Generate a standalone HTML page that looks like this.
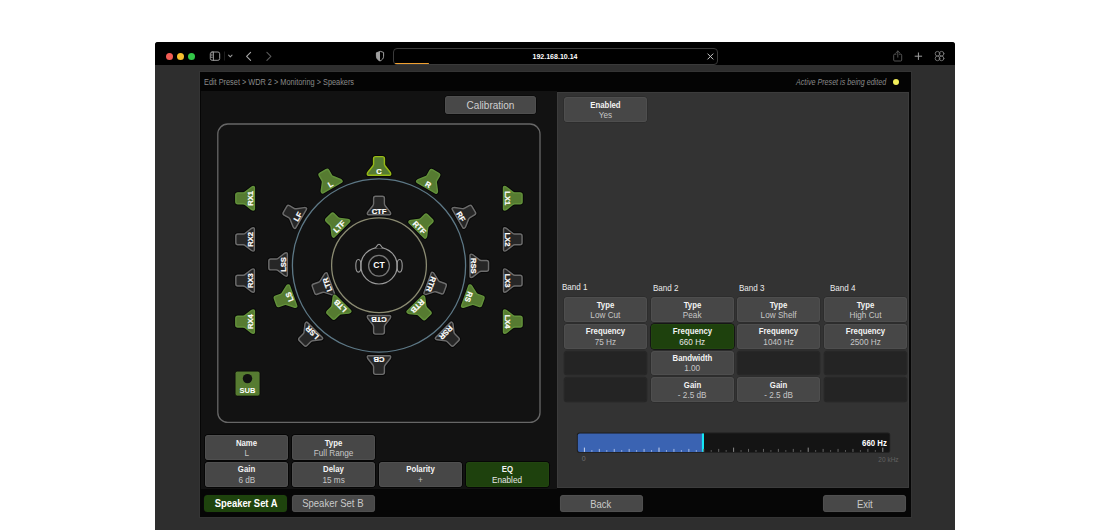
<!DOCTYPE html>
<html><head><meta charset="utf-8">
<style>
*{margin:0;padding:0;box-sizing:border-box}
html,body{width:1110px;height:530px;overflow:hidden;background:#fff;font-family:"Liberation Sans",sans-serif}
.a{position:absolute}
#win{left:155px;top:42px;width:800px;height:488px;background:#2e2e2e;border-radius:3px 3px 0 0;overflow:hidden}
#tb{left:155px;top:42px;width:800px;height:23.4px;background:#000;border-radius:3px 3px 0 0}
.dot{width:7px;height:7px;border-radius:50%;top:53px}
#url{left:393px;top:48px;width:324.6px;height:16.6px;border:1.8px solid #3a3a3a;border-radius:4px;background:#000}
#urltxt{left:393px;top:48.5px;width:324px;height:16px;color:#fff;font-size:8px;font-weight:bold;text-align:center;line-height:16px;transform:scaleX(0.88)}
#app{left:199.5px;top:72px;width:711px;height:445px;background:#060606;box-shadow:0 0 0 1px #343434}
#crumb{left:199.5px;top:72px;width:711.5px;height:18.5px;background:#040404}
#lp{left:200.5px;top:90.5px;width:356px;height:398.7px;background:#121212}
#rp{left:556.8px;top:92.4px;width:352.1px;height:395.3px;background:#333;border:1px solid #3c3c3c}
.btn{position:absolute;background:#484848;border-radius:3.5px;color:#fff;text-align:center;box-shadow:inset 0 0 0 1px #4f4f4f,0 0 0 0.8px #0a0a0a}
.btn2{position:absolute;background:#474747;border-radius:3.5px;text-align:center;width:83px;height:24.5px;box-shadow:inset 0 0 0 1px #4e4e4e,0 0 0 0.8px #2c2c2c}
.btn2 .t{position:absolute;left:0;right:0;top:3.2px;font-size:8.2px;font-weight:bold;color:#f4f4f4;line-height:10px;transform:scaleX(0.95)}
.btn2 .v{position:absolute;left:0;right:0;top:13.5px;font-size:8.2px;color:#c6c6c6;line-height:10px}
.dk{box-shadow:inset 0 0 0 1px #4f4f4f,0 0 0 1px #060606}
.dk.green{box-shadow:inset 0 0 0 1px #224510,0 0 0 1px #060606}
.empty{background:#242424;box-shadow:inset 0 0 0 1px #272727,0 0 0 0.8px #2e2e2e}
.green{background:#1e410d;box-shadow:inset 0 0 0 1px #224510,0 0 0 0.8px #0e0e0e}
.green .v{color:#e6e6e6}
.band{position:absolute;font-size:8.4px;color:#ececec;line-height:10px;transform:scaleX(0.96);transform-origin:0 0}
</style></head><body>
<div id="win" class="a"></div>
<div id="tb" class="a"></div>
<div class="a dot" style="left:165.8px;background:#f25c54"></div>
<div class="a dot" style="left:176.9px;background:#f6bf2e"></div>
<div class="a dot" style="left:188px;background:#33c748"></div>
<div id="url" class="a"></div>
<div class="a" style="left:394.5px;top:62.6px;width:34.5px;height:1.7px;background:#f0a030;border-radius:1px"></div>
<div id="urltxt" class="a">192.168.10.14</div>

<!-- toolbar icons -->
<svg class="a" style="left:0;top:0" width="1110" height="530" viewBox="0 0 1110 530">
<g fill="none" stroke="#9a9a9a" stroke-width="1" stroke-linecap="round" stroke-linejoin="round">
<rect x="210.3" y="52" width="9.4" height="8.3" rx="1.8"/>
<line x1="213.4" y1="52" x2="213.4" y2="60.3"/>
<path d="M211.4 54.2h0.9M211.4 55.8h0.9M211.4 57.4h0.9" stroke-width="0.8"/>
<path d="M228.6 55.2l1.7 1.6l1.7-1.6" stroke-width="1.1"/>
<path d="M250.6 52.3l-4 4l4 4" stroke="#a8a8a8" stroke-width="1.1"/>
<path d="M266.9 52.3l4 4l-4 4" stroke="#5a5a5a" stroke-width="1.1"/>
<path d="M380 51.5l-3.6 1.3v3.4c0 2.4 1.6 3.8 3.6 4.8c2-1 3.6-2.4 3.6-4.8v-3.4z" stroke="#a0a0a0" stroke-width="1"/>
<path d="M380 51.5l-3.6 1.3v3.4c0 2.4 1.6 3.8 3.6 4.8z" fill="#a0a0a0" stroke="none"/>
<path d="M707.8 53.9l5.2 5.2M713 53.9l-5.2 5.2" stroke="#c8c8c8" stroke-width="1"/>
<path d="M896 54.2h-1.3a1 1 0 0 0-1 1v4.8a1 1 0 0 0 1 1h6a1 1 0 0 0 1-1v-4.8a1 1 0 0 0-1-1h-1.3M897.8 51v6.2M895.8 53l2-2l2 2" stroke="#5c5c5c" stroke-width="0.9"/>
<path d="M918.4 52.9v6.6M915.1 56.2h6.6" stroke="#a0a0a0" stroke-width="1"/>
<g stroke="#7a7a7a" stroke-width="0.9"><circle cx="937.5" cy="53.7" r="2.3"/><circle cx="941.6" cy="53.7" r="2.3"/><circle cx="937.5" cy="58.4" r="2.3"/><circle cx="941.6" cy="58.4" r="2.3"/></g>
</g>
<line x1="224.5" y1="51.5" x2="224.5" y2="60.5" stroke="#1e1e1e" stroke-width="1"/>
</svg>
<div id="app" class="a"></div>
<div id="crumb" class="a"></div>
<div id="lp" class="a"></div>
<div id="rp" class="a"></div>

<!-- breadcrumb -->
<div class="a" style="left:204px;top:76.75px;font-size:8.5px;color:#8a8a8a;line-height:10px;white-space:nowrap;transform:scaleX(0.864);transform-origin:0 0">Edit Preset &gt; WDR 2 &gt; Monitoring &gt; Speakers</div>
<div class="a" style="left:796px;top:77px;font-size:8.3px;color:#8a8a8a;font-style:italic;line-height:10px;white-space:nowrap;transform:scaleX(0.861);transform-origin:0 0">Active Preset is being edited</div>
<div class="a" style="left:893px;top:78.8px;width:6.4px;height:6.4px;border-radius:50%;background:#f2ee5a"></div>

<!-- calibration -->
<div class="btn" style="left:445px;top:95.7px;width:91px;height:18px;color:#cfcfcf;font-size:10px;line-height:20px">Calibration</div>

<!-- bottom left buttons -->
<div class="btn2 dk" style="left:205.4px;top:435.4px"><div class="t">Name</div><div class="v">L</div></div>
<div class="btn2 dk" style="left:292.1px;top:435.4px"><div class="t">Type</div><div class="v">Full Range</div></div>
<div class="btn2 dk" style="left:205.4px;top:462.1px"><div class="t">Gain</div><div class="v">6 dB</div></div>
<div class="btn2 dk" style="left:292.1px;top:462.1px"><div class="t">Delay</div><div class="v">15 ms</div></div>
<div class="btn2 dk" style="left:378.8px;top:462.1px"><div class="t">Polarity</div><div class="v">+</div></div>
<div class="btn2 green dk" style="left:465.5px;top:462.1px"><div class="t">EQ</div><div class="v">Enabled</div></div>

<div class="btn" style="left:204px;top:494.6px;width:83.4px;height:17.4px;background:#1e430d;box-shadow:0 0 0 0.8px #0a0a0a;font-size:10.5px;font-weight:bold;line-height:17.4px"><span style="display:inline-block;transform:scaleX(0.895)">Speaker Set A</span></div>
<div class="btn" style="left:291.8px;top:494.6px;width:83px;height:17.4px;color:#cacaca;font-size:10.5px;line-height:17.4px"><span style="display:inline-block;transform:scaleX(0.905)">Speaker Set B</span></div>
<div class="btn" style="left:559.5px;top:494.6px;width:83.2px;height:17.3px;color:#cacaca;font-size:10.5px;line-height:18.6px"><span style="display:inline-block;transform:scaleX(0.9)">Back</span></div>
<div class="btn" style="left:822.7px;top:494.6px;width:83.2px;height:17.3px;color:#cacaca;font-size:10.5px;line-height:18.6px"><span style="display:inline-block;transform:scaleX(0.9)">Exit</span></div>

<!-- right panel -->
<div class="btn2" style="left:564px;top:97.4px"><div class="t">Enabled</div><div class="v">Yes</div></div>

<div class="band" style="left:561.8px;top:281.5px">Band 1</div>
<div class="band" style="left:652.9px;top:283.3px">Band 2</div>
<div class="band" style="left:738.9px;top:282.8px">Band 3</div>
<div class="band" style="left:830.4px;top:282.8px">Band 4</div>

<div class="btn2" style="left:563.9px;top:297.4px"><div class="t">Type</div><div class="v">Low Cut</div></div>
<div class="btn2" style="left:563.9px;top:324.1px"><div class="t">Frequency</div><div class="v">75 Hz</div></div>
<div class="btn2 empty" style="left:563.9px;top:350.6px"></div>
<div class="btn2 empty" style="left:563.9px;top:377.4px"></div>

<div class="btn2" style="left:650.7px;top:297.4px"><div class="t">Type</div><div class="v">Peak</div></div>
<div class="btn2 green" style="left:650.7px;top:324.1px"><div class="t">Frequency</div><div class="v">660 Hz</div></div>
<div class="btn2" style="left:650.7px;top:350.6px"><div class="t">Bandwidth</div><div class="v">1.00</div></div>
<div class="btn2" style="left:650.7px;top:377.4px"><div class="t">Gain</div><div class="v">- 2.5 dB</div></div>

<div class="btn2" style="left:737.1px;top:297.4px"><div class="t">Type</div><div class="v">Low Shelf</div></div>
<div class="btn2" style="left:737.1px;top:324.1px"><div class="t">Frequency</div><div class="v">1040 Hz</div></div>
<div class="btn2 empty" style="left:737.1px;top:350.6px"></div>
<div class="btn2" style="left:737.1px;top:377.4px"><div class="t">Gain</div><div class="v">- 2.5 dB</div></div>

<div class="btn2" style="left:824px;top:297.4px"><div class="t">Type</div><div class="v">High Cut</div></div>
<div class="btn2" style="left:824px;top:324.1px"><div class="t">Frequency</div><div class="v">2500 Hz</div></div>
<div class="btn2 empty" style="left:824px;top:350.6px"></div>
<div class="btn2 empty" style="left:824px;top:377.4px"></div>

<!-- slider -->
<svg class="a" style="left:0;top:0" width="1110" height="530" viewBox="0 0 1110 530">
<rect x="576.9" y="432.5" width="313.3" height="20.3" rx="2.6" fill="#1e1e1e"/>
<rect x="577.8" y="433.4" width="311.5" height="18.5" rx="2" fill="#141414"/>
<path d="M579.8 433.4H702V451.9H579.8A2 2 0 0 1 577.8 449.9V435.4A2 2 0 0 1 579.8 433.4Z" fill="#3a63b2"/>
<rect x="701.9" y="433.4" width="2.1" height="18.5" fill="#14e6f5"/>
<rect x="583.90" y="447.60" width="1" height="4.30" fill="#c8d4ee"/>
<rect x="591.36" y="450.00" width="1" height="1.90" fill="#90a8dc"/>
<rect x="598.82" y="448.90" width="1" height="3.00" fill="#a8bce4"/>
<rect x="606.28" y="450.00" width="1" height="1.90" fill="#90a8dc"/>
<rect x="613.74" y="448.90" width="1" height="3.00" fill="#a8bce4"/>
<rect x="621.20" y="450.00" width="1" height="1.90" fill="#90a8dc"/>
<rect x="628.66" y="448.90" width="1" height="3.00" fill="#a8bce4"/>
<rect x="636.12" y="450.00" width="1" height="1.90" fill="#90a8dc"/>
<rect x="643.58" y="448.90" width="1" height="3.00" fill="#a8bce4"/>
<rect x="651.04" y="450.00" width="1" height="1.90" fill="#90a8dc"/>
<rect x="658.50" y="447.60" width="1" height="4.30" fill="#c8d4ee"/>
<rect x="665.96" y="450.00" width="1" height="1.90" fill="#90a8dc"/>
<rect x="673.42" y="448.90" width="1" height="3.00" fill="#a8bce4"/>
<rect x="680.88" y="450.00" width="1" height="1.90" fill="#90a8dc"/>
<rect x="688.34" y="448.90" width="1" height="3.00" fill="#a8bce4"/>
<rect x="695.80" y="450.00" width="1" height="1.90" fill="#90a8dc"/>
<rect x="703.26" y="448.90" width="1" height="3.00" fill="#676767"/>
<rect x="710.72" y="450.00" width="1" height="1.90" fill="#565656"/>
<rect x="718.18" y="448.90" width="1" height="3.00" fill="#676767"/>
<rect x="725.64" y="450.00" width="1" height="1.90" fill="#565656"/>
<rect x="733.10" y="447.60" width="1" height="4.30" fill="#8a8a8a"/>
<rect x="740.56" y="450.00" width="1" height="1.90" fill="#565656"/>
<rect x="748.02" y="448.90" width="1" height="3.00" fill="#676767"/>
<rect x="755.48" y="450.00" width="1" height="1.90" fill="#565656"/>
<rect x="762.94" y="448.90" width="1" height="3.00" fill="#676767"/>
<rect x="770.40" y="450.00" width="1" height="1.90" fill="#565656"/>
<rect x="777.86" y="448.90" width="1" height="3.00" fill="#676767"/>
<rect x="785.32" y="450.00" width="1" height="1.90" fill="#565656"/>
<rect x="792.78" y="448.90" width="1" height="3.00" fill="#676767"/>
<rect x="800.24" y="450.00" width="1" height="1.90" fill="#565656"/>
<rect x="807.70" y="447.60" width="1" height="4.30" fill="#8a8a8a"/>
<rect x="815.16" y="450.00" width="1" height="1.90" fill="#565656"/>
<rect x="822.62" y="448.90" width="1" height="3.00" fill="#676767"/>
<rect x="830.08" y="450.00" width="1" height="1.90" fill="#565656"/>
<rect x="837.54" y="448.90" width="1" height="3.00" fill="#676767"/>
<rect x="845.00" y="450.00" width="1" height="1.90" fill="#565656"/>
<rect x="852.46" y="448.90" width="1" height="3.00" fill="#676767"/>
<rect x="859.92" y="450.00" width="1" height="1.90" fill="#565656"/>
<rect x="867.38" y="448.90" width="1" height="3.00" fill="#676767"/>
<rect x="874.84" y="450.00" width="1" height="1.90" fill="#565656"/>
<rect x="882.30" y="447.60" width="1" height="4.30" fill="#8a8a8a"/>
</svg>
<div class="a" style="left:820px;top:437.5px;width:66.8px;text-align:right;font-size:8.4px;font-weight:bold;color:#fff;line-height:10px;transform:scaleX(0.93);transform-origin:100% 0">660 Hz</div>
<div class="a" style="left:581.8px;top:455.1px;font-size:7px;color:#6e6e6e;line-height:8px">0</div>
<div class="a" style="left:860px;top:455.5px;width:38.6px;text-align:right;font-size:6.5px;color:#626262;line-height:8px">20 kHz</div>

<!-- SVG overlay -->
<svg class="a" style="left:0;top:0" width="1110" height="530" viewBox="0 0 1110 530" id="ov">
<rect x="217.8" y="124" width="322.2" height="298.4" rx="10" fill="none" stroke="#676767" stroke-width="1.3"/>
<circle cx="379.00" cy="265.50" r="86.6" fill="none" stroke="#5d7886" stroke-width="1.3"/>
<circle cx="379.00" cy="265.30" r="47.4" fill="none" stroke="#8b8b72" stroke-width="1.3"/>
<circle cx="379.00" cy="265.80" r="18.2" fill="none" stroke="#9a9a9a" stroke-width="1.2"/>
<circle cx="379.00" cy="265.80" r="10.4" fill="none" stroke="#777" stroke-width="1.3"/>
<ellipse cx="358.4" cy="265.80" rx="2.6" ry="6.3" fill="none" stroke="#9a9a9a" stroke-width="1.1"/>
<ellipse cx="399.6" cy="265.80" rx="2.6" ry="6.3" fill="none" stroke="#9a9a9a" stroke-width="1.1"/>
<path d="M375.3 248.00 C376.6 247.20 377.2 244.20 379 244.20 C380.8 244.20 381.4 247.20 382.7 248.00" fill="#111" stroke="#9a9a9a" stroke-width="1.1"/>
<text x="379.00" y="268.30" font-family="Liberation Sans" font-weight="bold" font-size="8.6" fill="#fff" text-anchor="middle">CT</text>
<g transform="translate(379.00 265.50) rotate(0) translate(0 -89.60)"><path d="M-5.43 -17.27Q-5.43 -19.27 -3.43 -19.27L3.43 -19.27Q5.43 -19.27 5.43 -17.27L5.43 -12.00Q5.43 -10.80 6.17 -9.86L11.08 -3.62Q11.72 -2.80 11.72 -1.76L11.72 -1.76Q11.72 -0.72 10.69 -0.72L-10.69 -0.72Q-11.72 -0.72 -11.72 -1.76L-11.72 -1.76Q-11.72 -2.80 -11.08 -3.62L-6.17 -9.86Q-5.43 -10.80 -5.43 -12.00Z" fill="none" stroke="#000" stroke-width="3.3" stroke-opacity="0.6"/><path d="M-5.43 -17.27Q-5.43 -19.27 -3.43 -19.27L3.43 -19.27Q5.43 -19.27 5.43 -17.27L5.43 -12.00Q5.43 -10.80 6.17 -9.86L11.08 -3.62Q11.72 -2.80 11.72 -1.76L11.72 -1.76Q11.72 -0.72 10.69 -0.72L-10.69 -0.72Q-11.72 -0.72 -11.72 -1.76L-11.72 -1.76Q-11.72 -2.80 -11.08 -3.62L-6.17 -9.86Q-5.43 -10.80 -5.43 -12.00Z" fill="#567b31" stroke="#98ba16" stroke-width="1.45"/><text x="0" y="-1.85" font-family="Liberation Sans" font-weight="bold" font-size="7.6" fill="#fff" stroke="#fff" stroke-width="0.22" text-anchor="middle">C</text></g>
<g transform="translate(377.50 265.75) rotate(-30) translate(0 -89.60)"><path d="M-5.43 -17.27Q-5.43 -19.27 -3.43 -19.27L3.43 -19.27Q5.43 -19.27 5.43 -17.27L5.43 -12.00Q5.43 -10.80 6.17 -9.86L11.08 -3.62Q11.72 -2.80 11.72 -1.76L11.72 -1.76Q11.72 -0.72 10.69 -0.72L-10.69 -0.72Q-11.72 -0.72 -11.72 -1.76L-11.72 -1.76Q-11.72 -2.80 -11.08 -3.62L-6.17 -9.86Q-5.43 -10.80 -5.43 -12.00Z" fill="none" stroke="#000" stroke-width="3.3" stroke-opacity="0.6"/><path d="M-5.43 -17.27Q-5.43 -19.27 -3.43 -19.27L3.43 -19.27Q5.43 -19.27 5.43 -17.27L5.43 -12.00Q5.43 -10.80 6.17 -9.86L11.08 -3.62Q11.72 -2.80 11.72 -1.76L11.72 -1.76Q11.72 -0.72 10.69 -0.72L-10.69 -0.72Q-11.72 -0.72 -11.72 -1.76L-11.72 -1.76Q-11.72 -2.80 -11.08 -3.62L-6.17 -9.86Q-5.43 -10.80 -5.43 -12.00Z" fill="#567b31" stroke="#62913a" stroke-width="1.45"/><text x="0" y="-1.85" font-family="Liberation Sans" font-weight="bold" font-size="7.6" fill="#fff" stroke="#fff" stroke-width="0.22" text-anchor="middle">L</text></g>
<g transform="translate(381.20 265.95) rotate(30) translate(0 -89.60)"><path d="M-5.43 -17.27Q-5.43 -19.27 -3.43 -19.27L3.43 -19.27Q5.43 -19.27 5.43 -17.27L5.43 -12.00Q5.43 -10.80 6.17 -9.86L11.08 -3.62Q11.72 -2.80 11.72 -1.76L11.72 -1.76Q11.72 -0.72 10.69 -0.72L-10.69 -0.72Q-11.72 -0.72 -11.72 -1.76L-11.72 -1.76Q-11.72 -2.80 -11.08 -3.62L-6.17 -9.86Q-5.43 -10.80 -5.43 -12.00Z" fill="none" stroke="#000" stroke-width="3.3" stroke-opacity="0.6"/><path d="M-5.43 -17.27Q-5.43 -19.27 -3.43 -19.27L3.43 -19.27Q5.43 -19.27 5.43 -17.27L5.43 -12.00Q5.43 -10.80 6.17 -9.86L11.08 -3.62Q11.72 -2.80 11.72 -1.76L11.72 -1.76Q11.72 -0.72 10.69 -0.72L-10.69 -0.72Q-11.72 -0.72 -11.72 -1.76L-11.72 -1.76Q-11.72 -2.80 -11.08 -3.62L-6.17 -9.86Q-5.43 -10.80 -5.43 -12.00Z" fill="#567b31" stroke="#62913a" stroke-width="1.45"/><text x="0" y="-1.85" font-family="Liberation Sans" font-weight="bold" font-size="7.6" fill="#fff" stroke="#fff" stroke-width="0.22" text-anchor="middle">R</text></g>
<g transform="translate(379.35 263.80) rotate(-60) translate(0 -89.60)"><path d="M-5.43 -17.27Q-5.43 -19.27 -3.43 -19.27L3.43 -19.27Q5.43 -19.27 5.43 -17.27L5.43 -12.00Q5.43 -10.80 6.17 -9.86L11.08 -3.62Q11.72 -2.80 11.72 -1.76L11.72 -1.76Q11.72 -0.72 10.69 -0.72L-10.69 -0.72Q-11.72 -0.72 -11.72 -1.76L-11.72 -1.76Q-11.72 -2.80 -11.08 -3.62L-6.17 -9.86Q-5.43 -10.80 -5.43 -12.00Z" fill="none" stroke="#000" stroke-width="3.3" stroke-opacity="0.6"/><path d="M-5.43 -17.27Q-5.43 -19.27 -3.43 -19.27L3.43 -19.27Q5.43 -19.27 5.43 -17.27L5.43 -12.00Q5.43 -10.80 6.17 -9.86L11.08 -3.62Q11.72 -2.80 11.72 -1.76L11.72 -1.76Q11.72 -0.72 10.69 -0.72L-10.69 -0.72Q-11.72 -0.72 -11.72 -1.76L-11.72 -1.76Q-11.72 -2.80 -11.08 -3.62L-6.17 -9.86Q-5.43 -10.80 -5.43 -12.00Z" fill="#262626" stroke="#6c6c6c" stroke-width="1.45"/><text x="0" y="-1.85" font-family="Liberation Sans" font-weight="bold" font-size="7.6" fill="#fff" stroke="#fff" stroke-width="0.22" text-anchor="middle">LF</text></g>
<g transform="translate(379.35 263.70) rotate(60) translate(0 -89.60)"><path d="M-5.43 -17.27Q-5.43 -19.27 -3.43 -19.27L3.43 -19.27Q5.43 -19.27 5.43 -17.27L5.43 -12.00Q5.43 -10.80 6.17 -9.86L11.08 -3.62Q11.72 -2.80 11.72 -1.76L11.72 -1.76Q11.72 -0.72 10.69 -0.72L-10.69 -0.72Q-11.72 -0.72 -11.72 -1.76L-11.72 -1.76Q-11.72 -2.80 -11.08 -3.62L-6.17 -9.86Q-5.43 -10.80 -5.43 -12.00Z" fill="none" stroke="#000" stroke-width="3.3" stroke-opacity="0.6"/><path d="M-5.43 -17.27Q-5.43 -19.27 -3.43 -19.27L3.43 -19.27Q5.43 -19.27 5.43 -17.27L5.43 -12.00Q5.43 -10.80 6.17 -9.86L11.08 -3.62Q11.72 -2.80 11.72 -1.76L11.72 -1.76Q11.72 -0.72 10.69 -0.72L-10.69 -0.72Q-11.72 -0.72 -11.72 -1.76L-11.72 -1.76Q-11.72 -2.80 -11.08 -3.62L-6.17 -9.86Q-5.43 -10.80 -5.43 -12.00Z" fill="#262626" stroke="#6c6c6c" stroke-width="1.45"/><text x="0" y="-1.85" font-family="Liberation Sans" font-weight="bold" font-size="7.6" fill="#fff" stroke="#fff" stroke-width="0.22" text-anchor="middle">RF</text></g>
<g transform="translate(377.70 264.45) rotate(-90) translate(0 -89.60)"><path d="M-5.43 -17.27Q-5.43 -19.27 -3.43 -19.27L3.43 -19.27Q5.43 -19.27 5.43 -17.27L5.43 -12.00Q5.43 -10.80 6.17 -9.86L11.08 -3.62Q11.72 -2.80 11.72 -1.76L11.72 -1.76Q11.72 -0.72 10.69 -0.72L-10.69 -0.72Q-11.72 -0.72 -11.72 -1.76L-11.72 -1.76Q-11.72 -2.80 -11.08 -3.62L-6.17 -9.86Q-5.43 -10.80 -5.43 -12.00Z" fill="none" stroke="#000" stroke-width="3.3" stroke-opacity="0.6"/><path d="M-5.43 -17.27Q-5.43 -19.27 -3.43 -19.27L3.43 -19.27Q5.43 -19.27 5.43 -17.27L5.43 -12.00Q5.43 -10.80 6.17 -9.86L11.08 -3.62Q11.72 -2.80 11.72 -1.76L11.72 -1.76Q11.72 -0.72 10.69 -0.72L-10.69 -0.72Q-11.72 -0.72 -11.72 -1.76L-11.72 -1.76Q-11.72 -2.80 -11.08 -3.62L-6.17 -9.86Q-5.43 -10.80 -5.43 -12.00Z" fill="#262626" stroke="#6c6c6c" stroke-width="1.45"/><text x="0" y="-1.85" font-family="Liberation Sans" font-weight="bold" font-size="7.6" fill="#fff" stroke="#fff" stroke-width="0.22" text-anchor="middle">LSS</text></g>
<g transform="translate(379.70 265.85) rotate(90) translate(0 -89.60)"><path d="M-5.43 -17.27Q-5.43 -19.27 -3.43 -19.27L3.43 -19.27Q5.43 -19.27 5.43 -17.27L5.43 -12.00Q5.43 -10.80 6.17 -9.86L11.08 -3.62Q11.72 -2.80 11.72 -1.76L11.72 -1.76Q11.72 -0.72 10.69 -0.72L-10.69 -0.72Q-11.72 -0.72 -11.72 -1.76L-11.72 -1.76Q-11.72 -2.80 -11.08 -3.62L-6.17 -9.86Q-5.43 -10.80 -5.43 -12.00Z" fill="none" stroke="#000" stroke-width="3.3" stroke-opacity="0.6"/><path d="M-5.43 -17.27Q-5.43 -19.27 -3.43 -19.27L3.43 -19.27Q5.43 -19.27 5.43 -17.27L5.43 -12.00Q5.43 -10.80 6.17 -9.86L11.08 -3.62Q11.72 -2.80 11.72 -1.76L11.72 -1.76Q11.72 -0.72 10.69 -0.72L-10.69 -0.72Q-11.72 -0.72 -11.72 -1.76L-11.72 -1.76Q-11.72 -2.80 -11.08 -3.62L-6.17 -9.86Q-5.43 -10.80 -5.43 -12.00Z" fill="#262626" stroke="#6c6c6c" stroke-width="1.45"/><text x="0" y="-1.85" font-family="Liberation Sans" font-weight="bold" font-size="7.6" fill="#fff" stroke="#fff" stroke-width="0.22" text-anchor="middle">RSS</text></g>
<g transform="translate(377.92 264.74) rotate(-110) translate(0 -89.60)"><path d="M-5.43 -17.27Q-5.43 -19.27 -3.43 -19.27L3.43 -19.27Q5.43 -19.27 5.43 -17.27L5.43 -12.00Q5.43 -10.80 6.17 -9.86L11.08 -3.62Q11.72 -2.80 11.72 -1.76L11.72 -1.76Q11.72 -0.72 10.69 -0.72L-10.69 -0.72Q-11.72 -0.72 -11.72 -1.76L-11.72 -1.76Q-11.72 -2.80 -11.08 -3.62L-6.17 -9.86Q-5.43 -10.80 -5.43 -12.00Z" fill="none" stroke="#000" stroke-width="3.3" stroke-opacity="0.6"/><path d="M-5.43 -17.27Q-5.43 -19.27 -3.43 -19.27L3.43 -19.27Q5.43 -19.27 5.43 -17.27L5.43 -12.00Q5.43 -10.80 6.17 -9.86L11.08 -3.62Q11.72 -2.80 11.72 -1.76L11.72 -1.76Q11.72 -0.72 10.69 -0.72L-10.69 -0.72Q-11.72 -0.72 -11.72 -1.76L-11.72 -1.76Q-11.72 -2.80 -11.08 -3.62L-6.17 -9.86Q-5.43 -10.80 -5.43 -12.00Z" fill="#567b31" stroke="#62913a" stroke-width="1.45"/><text x="0" y="-1.85" font-family="Liberation Sans" font-weight="bold" font-size="7.6" fill="#fff" stroke="#fff" stroke-width="0.22" text-anchor="middle">LS</text></g>
<g transform="translate(380.38 264.74) rotate(110) translate(0 -89.60)"><path d="M-5.43 -17.27Q-5.43 -19.27 -3.43 -19.27L3.43 -19.27Q5.43 -19.27 5.43 -17.27L5.43 -12.00Q5.43 -10.80 6.17 -9.86L11.08 -3.62Q11.72 -2.80 11.72 -1.76L11.72 -1.76Q11.72 -0.72 10.69 -0.72L-10.69 -0.72Q-11.72 -0.72 -11.72 -1.76L-11.72 -1.76Q-11.72 -2.80 -11.08 -3.62L-6.17 -9.86Q-5.43 -10.80 -5.43 -12.00Z" fill="none" stroke="#000" stroke-width="3.3" stroke-opacity="0.6"/><path d="M-5.43 -17.27Q-5.43 -19.27 -3.43 -19.27L3.43 -19.27Q5.43 -19.27 5.43 -17.27L5.43 -12.00Q5.43 -10.80 6.17 -9.86L11.08 -3.62Q11.72 -2.80 11.72 -1.76L11.72 -1.76Q11.72 -0.72 10.69 -0.72L-10.69 -0.72Q-11.72 -0.72 -11.72 -1.76L-11.72 -1.76Q-11.72 -2.80 -11.08 -3.62L-6.17 -9.86Q-5.43 -10.80 -5.43 -12.00Z" fill="#567b31" stroke="#62913a" stroke-width="1.45"/><text x="0" y="-1.85" font-family="Liberation Sans" font-weight="bold" font-size="7.6" fill="#fff" stroke="#fff" stroke-width="0.22" text-anchor="middle">RS</text></g>
<g transform="translate(378.72 266.08) rotate(-135) translate(0 -89.60)"><path d="M-5.43 -17.27Q-5.43 -19.27 -3.43 -19.27L3.43 -19.27Q5.43 -19.27 5.43 -17.27L5.43 -12.00Q5.43 -10.80 6.17 -9.86L11.08 -3.62Q11.72 -2.80 11.72 -1.76L11.72 -1.76Q11.72 -0.72 10.69 -0.72L-10.69 -0.72Q-11.72 -0.72 -11.72 -1.76L-11.72 -1.76Q-11.72 -2.80 -11.08 -3.62L-6.17 -9.86Q-5.43 -10.80 -5.43 -12.00Z" fill="none" stroke="#000" stroke-width="3.3" stroke-opacity="0.6"/><path d="M-5.43 -17.27Q-5.43 -19.27 -3.43 -19.27L3.43 -19.27Q5.43 -19.27 5.43 -17.27L5.43 -12.00Q5.43 -10.80 6.17 -9.86L11.08 -3.62Q11.72 -2.80 11.72 -1.76L11.72 -1.76Q11.72 -0.72 10.69 -0.72L-10.69 -0.72Q-11.72 -0.72 -11.72 -1.76L-11.72 -1.76Q-11.72 -2.80 -11.08 -3.62L-6.17 -9.86Q-5.43 -10.80 -5.43 -12.00Z" fill="#262626" stroke="#6c6c6c" stroke-width="1.45"/><text x="0" y="-1.85" font-family="Liberation Sans" font-weight="bold" font-size="7.6" fill="#fff" stroke="#fff" stroke-width="0.22" text-anchor="middle">LSR</text></g>
<g transform="translate(379.28 266.08) rotate(135) translate(0 -89.60)"><path d="M-5.43 -17.27Q-5.43 -19.27 -3.43 -19.27L3.43 -19.27Q5.43 -19.27 5.43 -17.27L5.43 -12.00Q5.43 -10.80 6.17 -9.86L11.08 -3.62Q11.72 -2.80 11.72 -1.76L11.72 -1.76Q11.72 -0.72 10.69 -0.72L-10.69 -0.72Q-11.72 -0.72 -11.72 -1.76L-11.72 -1.76Q-11.72 -2.80 -11.08 -3.62L-6.17 -9.86Q-5.43 -10.80 -5.43 -12.00Z" fill="none" stroke="#000" stroke-width="3.3" stroke-opacity="0.6"/><path d="M-5.43 -17.27Q-5.43 -19.27 -3.43 -19.27L3.43 -19.27Q5.43 -19.27 5.43 -17.27L5.43 -12.00Q5.43 -10.80 6.17 -9.86L11.08 -3.62Q11.72 -2.80 11.72 -1.76L11.72 -1.76Q11.72 -0.72 10.69 -0.72L-10.69 -0.72Q-11.72 -0.72 -11.72 -1.76L-11.72 -1.76Q-11.72 -2.80 -11.08 -3.62L-6.17 -9.86Q-5.43 -10.80 -5.43 -12.00Z" fill="#262626" stroke="#6c6c6c" stroke-width="1.45"/><text x="0" y="-1.85" font-family="Liberation Sans" font-weight="bold" font-size="7.6" fill="#fff" stroke="#fff" stroke-width="0.22" text-anchor="middle">RSR</text></g>
<g transform="translate(379.00 265.50) rotate(180) translate(0 -89.60)"><path d="M-5.43 -17.27Q-5.43 -19.27 -3.43 -19.27L3.43 -19.27Q5.43 -19.27 5.43 -17.27L5.43 -12.00Q5.43 -10.80 6.17 -9.86L11.08 -3.62Q11.72 -2.80 11.72 -1.76L11.72 -1.76Q11.72 -0.72 10.69 -0.72L-10.69 -0.72Q-11.72 -0.72 -11.72 -1.76L-11.72 -1.76Q-11.72 -2.80 -11.08 -3.62L-6.17 -9.86Q-5.43 -10.80 -5.43 -12.00Z" fill="none" stroke="#000" stroke-width="3.3" stroke-opacity="0.6"/><path d="M-5.43 -17.27Q-5.43 -19.27 -3.43 -19.27L3.43 -19.27Q5.43 -19.27 5.43 -17.27L5.43 -12.00Q5.43 -10.80 6.17 -9.86L11.08 -3.62Q11.72 -2.80 11.72 -1.76L11.72 -1.76Q11.72 -0.72 10.69 -0.72L-10.69 -0.72Q-11.72 -0.72 -11.72 -1.76L-11.72 -1.76Q-11.72 -2.80 -11.08 -3.62L-6.17 -9.86Q-5.43 -10.80 -5.43 -12.00Z" fill="#262626" stroke="#6c6c6c" stroke-width="1.45"/><text x="0" y="-1.85" font-family="Liberation Sans" font-weight="bold" font-size="7.6" fill="#fff" stroke="#fff" stroke-width="0.22" text-anchor="middle">CB</text></g>
<g transform="translate(379.00 265.20) rotate(0) translate(0 -49.65)"><path d="M-5.43 -17.27Q-5.43 -19.27 -3.43 -19.27L3.43 -19.27Q5.43 -19.27 5.43 -17.27L5.43 -12.00Q5.43 -10.80 6.17 -9.86L11.08 -3.62Q11.72 -2.80 11.72 -1.76L11.72 -1.76Q11.72 -0.72 10.69 -0.72L-10.69 -0.72Q-11.72 -0.72 -11.72 -1.76L-11.72 -1.76Q-11.72 -2.80 -11.08 -3.62L-6.17 -9.86Q-5.43 -10.80 -5.43 -12.00Z" fill="none" stroke="#000" stroke-width="3.3" stroke-opacity="0.6"/><path d="M-5.43 -17.27Q-5.43 -19.27 -3.43 -19.27L3.43 -19.27Q5.43 -19.27 5.43 -17.27L5.43 -12.00Q5.43 -10.80 6.17 -9.86L11.08 -3.62Q11.72 -2.80 11.72 -1.76L11.72 -1.76Q11.72 -0.72 10.69 -0.72L-10.69 -0.72Q-11.72 -0.72 -11.72 -1.76L-11.72 -1.76Q-11.72 -2.80 -11.08 -3.62L-6.17 -9.86Q-5.43 -10.80 -5.43 -12.00Z" fill="#262626" stroke="#6c6c6c" stroke-width="1.45"/><text x="0" y="-1.85" font-family="Liberation Sans" font-weight="bold" font-size="7.6" fill="#fff" stroke="#fff" stroke-width="0.22" text-anchor="middle">CTF</text></g>
<g transform="translate(377.55 264.85) rotate(-45) translate(0 -49.65)"><path d="M-5.43 -17.27Q-5.43 -19.27 -3.43 -19.27L3.43 -19.27Q5.43 -19.27 5.43 -17.27L5.43 -12.00Q5.43 -10.80 6.17 -9.86L11.08 -3.62Q11.72 -2.80 11.72 -1.76L11.72 -1.76Q11.72 -0.72 10.69 -0.72L-10.69 -0.72Q-11.72 -0.72 -11.72 -1.76L-11.72 -1.76Q-11.72 -2.80 -11.08 -3.62L-6.17 -9.86Q-5.43 -10.80 -5.43 -12.00Z" fill="none" stroke="#000" stroke-width="3.3" stroke-opacity="0.6"/><path d="M-5.43 -17.27Q-5.43 -19.27 -3.43 -19.27L3.43 -19.27Q5.43 -19.27 5.43 -17.27L5.43 -12.00Q5.43 -10.80 6.17 -9.86L11.08 -3.62Q11.72 -2.80 11.72 -1.76L11.72 -1.76Q11.72 -0.72 10.69 -0.72L-10.69 -0.72Q-11.72 -0.72 -11.72 -1.76L-11.72 -1.76Q-11.72 -2.80 -11.08 -3.62L-6.17 -9.86Q-5.43 -10.80 -5.43 -12.00Z" fill="#567b31" stroke="#62913a" stroke-width="1.45"/><text x="0" y="-1.85" font-family="Liberation Sans" font-weight="bold" font-size="7.6" fill="#fff" stroke="#fff" stroke-width="0.22" text-anchor="middle">LTF</text></g>
<g transform="translate(381.15 265.85) rotate(45) translate(0 -49.65)"><path d="M-5.43 -17.27Q-5.43 -19.27 -3.43 -19.27L3.43 -19.27Q5.43 -19.27 5.43 -17.27L5.43 -12.00Q5.43 -10.80 6.17 -9.86L11.08 -3.62Q11.72 -2.80 11.72 -1.76L11.72 -1.76Q11.72 -0.72 10.69 -0.72L-10.69 -0.72Q-11.72 -0.72 -11.72 -1.76L-11.72 -1.76Q-11.72 -2.80 -11.08 -3.62L-6.17 -9.86Q-5.43 -10.80 -5.43 -12.00Z" fill="none" stroke="#000" stroke-width="3.3" stroke-opacity="0.6"/><path d="M-5.43 -17.27Q-5.43 -19.27 -3.43 -19.27L3.43 -19.27Q5.43 -19.27 5.43 -17.27L5.43 -12.00Q5.43 -10.80 6.17 -9.86L11.08 -3.62Q11.72 -2.80 11.72 -1.76L11.72 -1.76Q11.72 -0.72 10.69 -0.72L-10.69 -0.72Q-11.72 -0.72 -11.72 -1.76L-11.72 -1.76Q-11.72 -2.80 -11.08 -3.62L-6.17 -9.86Q-5.43 -10.80 -5.43 -12.00Z" fill="#567b31" stroke="#62913a" stroke-width="1.45"/><text x="0" y="-1.85" font-family="Liberation Sans" font-weight="bold" font-size="7.6" fill="#fff" stroke="#fff" stroke-width="0.22" text-anchor="middle">RTF</text></g>
<g transform="translate(378.23 266.26) rotate(-110) translate(0 -49.65)"><path d="M-5.43 -17.27Q-5.43 -19.27 -3.43 -19.27L3.43 -19.27Q5.43 -19.27 5.43 -17.27L5.43 -12.00Q5.43 -10.80 6.17 -9.86L11.08 -3.62Q11.72 -2.80 11.72 -1.76L11.72 -1.76Q11.72 -0.72 10.69 -0.72L-10.69 -0.72Q-11.72 -0.72 -11.72 -1.76L-11.72 -1.76Q-11.72 -2.80 -11.08 -3.62L-6.17 -9.86Q-5.43 -10.80 -5.43 -12.00Z" fill="none" stroke="#000" stroke-width="3.3" stroke-opacity="0.6"/><path d="M-5.43 -17.27Q-5.43 -19.27 -3.43 -19.27L3.43 -19.27Q5.43 -19.27 5.43 -17.27L5.43 -12.00Q5.43 -10.80 6.17 -9.86L11.08 -3.62Q11.72 -2.80 11.72 -1.76L11.72 -1.76Q11.72 -0.72 10.69 -0.72L-10.69 -0.72Q-11.72 -0.72 -11.72 -1.76L-11.72 -1.76Q-11.72 -2.80 -11.08 -3.62L-6.17 -9.86Q-5.43 -10.80 -5.43 -12.00Z" fill="#262626" stroke="#6c6c6c" stroke-width="1.45"/><text x="0" y="-1.85" font-family="Liberation Sans" font-weight="bold" font-size="7.6" fill="#fff" stroke="#fff" stroke-width="0.22" text-anchor="middle">LTR</text></g>
<g transform="translate(380.27 265.76) rotate(110) translate(0 -49.65)"><path d="M-5.43 -17.27Q-5.43 -19.27 -3.43 -19.27L3.43 -19.27Q5.43 -19.27 5.43 -17.27L5.43 -12.00Q5.43 -10.80 6.17 -9.86L11.08 -3.62Q11.72 -2.80 11.72 -1.76L11.72 -1.76Q11.72 -0.72 10.69 -0.72L-10.69 -0.72Q-11.72 -0.72 -11.72 -1.76L-11.72 -1.76Q-11.72 -2.80 -11.08 -3.62L-6.17 -9.86Q-5.43 -10.80 -5.43 -12.00Z" fill="none" stroke="#000" stroke-width="3.3" stroke-opacity="0.6"/><path d="M-5.43 -17.27Q-5.43 -19.27 -3.43 -19.27L3.43 -19.27Q5.43 -19.27 5.43 -17.27L5.43 -12.00Q5.43 -10.80 6.17 -9.86L11.08 -3.62Q11.72 -2.80 11.72 -1.76L11.72 -1.76Q11.72 -0.72 10.69 -0.72L-10.69 -0.72Q-11.72 -0.72 -11.72 -1.76L-11.72 -1.76Q-11.72 -2.80 -11.08 -3.62L-6.17 -9.86Q-5.43 -10.80 -5.43 -12.00Z" fill="#262626" stroke="#6c6c6c" stroke-width="1.45"/><text x="0" y="-1.85" font-family="Liberation Sans" font-weight="bold" font-size="7.6" fill="#fff" stroke="#fff" stroke-width="0.22" text-anchor="middle">RTR</text></g>
<g transform="translate(378.65 267.45) rotate(-135) translate(0 -49.65)"><path d="M-5.43 -17.27Q-5.43 -19.27 -3.43 -19.27L3.43 -19.27Q5.43 -19.27 5.43 -17.27L5.43 -12.00Q5.43 -10.80 6.17 -9.86L11.08 -3.62Q11.72 -2.80 11.72 -1.76L11.72 -1.76Q11.72 -0.72 10.69 -0.72L-10.69 -0.72Q-11.72 -0.72 -11.72 -1.76L-11.72 -1.76Q-11.72 -2.80 -11.08 -3.62L-6.17 -9.86Q-5.43 -10.80 -5.43 -12.00Z" fill="none" stroke="#000" stroke-width="3.3" stroke-opacity="0.6"/><path d="M-5.43 -17.27Q-5.43 -19.27 -3.43 -19.27L3.43 -19.27Q5.43 -19.27 5.43 -17.27L5.43 -12.00Q5.43 -10.80 6.17 -9.86L11.08 -3.62Q11.72 -2.80 11.72 -1.76L11.72 -1.76Q11.72 -0.72 10.69 -0.72L-10.69 -0.72Q-11.72 -0.72 -11.72 -1.76L-11.72 -1.76Q-11.72 -2.80 -11.08 -3.62L-6.17 -9.86Q-5.43 -10.80 -5.43 -12.00Z" fill="#567b31" stroke="#62913a" stroke-width="1.45"/><text x="0" y="-1.85" font-family="Liberation Sans" font-weight="bold" font-size="7.6" fill="#fff" stroke="#fff" stroke-width="0.22" text-anchor="middle">LTB</text></g>
<g transform="translate(379.25 267.95) rotate(135) translate(0 -49.65)"><path d="M-5.43 -17.27Q-5.43 -19.27 -3.43 -19.27L3.43 -19.27Q5.43 -19.27 5.43 -17.27L5.43 -12.00Q5.43 -10.80 6.17 -9.86L11.08 -3.62Q11.72 -2.80 11.72 -1.76L11.72 -1.76Q11.72 -0.72 10.69 -0.72L-10.69 -0.72Q-11.72 -0.72 -11.72 -1.76L-11.72 -1.76Q-11.72 -2.80 -11.08 -3.62L-6.17 -9.86Q-5.43 -10.80 -5.43 -12.00Z" fill="none" stroke="#000" stroke-width="3.3" stroke-opacity="0.6"/><path d="M-5.43 -17.27Q-5.43 -19.27 -3.43 -19.27L3.43 -19.27Q5.43 -19.27 5.43 -17.27L5.43 -12.00Q5.43 -10.80 6.17 -9.86L11.08 -3.62Q11.72 -2.80 11.72 -1.76L11.72 -1.76Q11.72 -0.72 10.69 -0.72L-10.69 -0.72Q-11.72 -0.72 -11.72 -1.76L-11.72 -1.76Q-11.72 -2.80 -11.08 -3.62L-6.17 -9.86Q-5.43 -10.80 -5.43 -12.00Z" fill="#567b31" stroke="#62913a" stroke-width="1.45"/><text x="0" y="-1.85" font-family="Liberation Sans" font-weight="bold" font-size="7.6" fill="#fff" stroke="#fff" stroke-width="0.22" text-anchor="middle">RTB</text></g>
<g transform="translate(379.00 265.20) rotate(180) translate(0 -49.65)"><path d="M-5.43 -17.27Q-5.43 -19.27 -3.43 -19.27L3.43 -19.27Q5.43 -19.27 5.43 -17.27L5.43 -12.00Q5.43 -10.80 6.17 -9.86L11.08 -3.62Q11.72 -2.80 11.72 -1.76L11.72 -1.76Q11.72 -0.72 10.69 -0.72L-10.69 -0.72Q-11.72 -0.72 -11.72 -1.76L-11.72 -1.76Q-11.72 -2.80 -11.08 -3.62L-6.17 -9.86Q-5.43 -10.80 -5.43 -12.00Z" fill="none" stroke="#000" stroke-width="3.3" stroke-opacity="0.6"/><path d="M-5.43 -17.27Q-5.43 -19.27 -3.43 -19.27L3.43 -19.27Q5.43 -19.27 5.43 -17.27L5.43 -12.00Q5.43 -10.80 6.17 -9.86L11.08 -3.62Q11.72 -2.80 11.72 -1.76L11.72 -1.76Q11.72 -0.72 10.69 -0.72L-10.69 -0.72Q-11.72 -0.72 -11.72 -1.76L-11.72 -1.76Q-11.72 -2.80 -11.08 -3.62L-6.17 -9.86Q-5.43 -10.80 -5.43 -12.00Z" fill="#262626" stroke="#6c6c6c" stroke-width="1.45"/><text x="0" y="-1.85" font-family="Liberation Sans" font-weight="bold" font-size="7.6" fill="#fff" stroke="#fff" stroke-width="0.22" text-anchor="middle">CTB</text></g>
<g transform="translate(255.1 198.30) rotate(-90)"><path d="M-5.43 -17.27Q-5.43 -19.27 -3.43 -19.27L3.43 -19.27Q5.43 -19.27 5.43 -17.27L5.43 -12.00Q5.43 -10.80 6.17 -9.86L11.08 -3.62Q11.72 -2.80 11.72 -1.76L11.72 -1.76Q11.72 -0.72 10.69 -0.72L-10.69 -0.72Q-11.72 -0.72 -11.72 -1.76L-11.72 -1.76Q-11.72 -2.80 -11.08 -3.62L-6.17 -9.86Q-5.43 -10.80 -5.43 -12.00Z" fill="none" stroke="#000" stroke-width="3.3" stroke-opacity="0.6"/><path d="M-5.43 -17.27Q-5.43 -19.27 -3.43 -19.27L3.43 -19.27Q5.43 -19.27 5.43 -17.27L5.43 -12.00Q5.43 -10.80 6.17 -9.86L11.08 -3.62Q11.72 -2.80 11.72 -1.76L11.72 -1.76Q11.72 -0.72 10.69 -0.72L-10.69 -0.72Q-11.72 -0.72 -11.72 -1.76L-11.72 -1.76Q-11.72 -2.80 -11.08 -3.62L-6.17 -9.86Q-5.43 -10.80 -5.43 -12.00Z" fill="#567b31" stroke="#62913a" stroke-width="1.45"/><text x="0" y="-1.85" font-family="Liberation Sans" font-weight="bold" font-size="7.6" fill="#fff" stroke="#fff" stroke-width="0.22" text-anchor="middle">RX1</text></g>
<g transform="translate(502.8 198.30) rotate(90)"><path d="M-5.43 -17.27Q-5.43 -19.27 -3.43 -19.27L3.43 -19.27Q5.43 -19.27 5.43 -17.27L5.43 -12.00Q5.43 -10.80 6.17 -9.86L11.08 -3.62Q11.72 -2.80 11.72 -1.76L11.72 -1.76Q11.72 -0.72 10.69 -0.72L-10.69 -0.72Q-11.72 -0.72 -11.72 -1.76L-11.72 -1.76Q-11.72 -2.80 -11.08 -3.62L-6.17 -9.86Q-5.43 -10.80 -5.43 -12.00Z" fill="none" stroke="#000" stroke-width="3.3" stroke-opacity="0.6"/><path d="M-5.43 -17.27Q-5.43 -19.27 -3.43 -19.27L3.43 -19.27Q5.43 -19.27 5.43 -17.27L5.43 -12.00Q5.43 -10.80 6.17 -9.86L11.08 -3.62Q11.72 -2.80 11.72 -1.76L11.72 -1.76Q11.72 -0.72 10.69 -0.72L-10.69 -0.72Q-11.72 -0.72 -11.72 -1.76L-11.72 -1.76Q-11.72 -2.80 -11.08 -3.62L-6.17 -9.86Q-5.43 -10.80 -5.43 -12.00Z" fill="#567b31" stroke="#62913a" stroke-width="1.45"/><text x="0" y="-1.85" font-family="Liberation Sans" font-weight="bold" font-size="7.6" fill="#fff" stroke="#fff" stroke-width="0.22" text-anchor="middle">LX1</text></g>
<g transform="translate(255.1 239.40) rotate(-90)"><path d="M-5.43 -17.27Q-5.43 -19.27 -3.43 -19.27L3.43 -19.27Q5.43 -19.27 5.43 -17.27L5.43 -12.00Q5.43 -10.80 6.17 -9.86L11.08 -3.62Q11.72 -2.80 11.72 -1.76L11.72 -1.76Q11.72 -0.72 10.69 -0.72L-10.69 -0.72Q-11.72 -0.72 -11.72 -1.76L-11.72 -1.76Q-11.72 -2.80 -11.08 -3.62L-6.17 -9.86Q-5.43 -10.80 -5.43 -12.00Z" fill="none" stroke="#000" stroke-width="3.3" stroke-opacity="0.6"/><path d="M-5.43 -17.27Q-5.43 -19.27 -3.43 -19.27L3.43 -19.27Q5.43 -19.27 5.43 -17.27L5.43 -12.00Q5.43 -10.80 6.17 -9.86L11.08 -3.62Q11.72 -2.80 11.72 -1.76L11.72 -1.76Q11.72 -0.72 10.69 -0.72L-10.69 -0.72Q-11.72 -0.72 -11.72 -1.76L-11.72 -1.76Q-11.72 -2.80 -11.08 -3.62L-6.17 -9.86Q-5.43 -10.80 -5.43 -12.00Z" fill="#262626" stroke="#6c6c6c" stroke-width="1.45"/><text x="0" y="-1.85" font-family="Liberation Sans" font-weight="bold" font-size="7.6" fill="#fff" stroke="#fff" stroke-width="0.22" text-anchor="middle">RX2</text></g>
<g transform="translate(502.8 239.40) rotate(90)"><path d="M-5.43 -17.27Q-5.43 -19.27 -3.43 -19.27L3.43 -19.27Q5.43 -19.27 5.43 -17.27L5.43 -12.00Q5.43 -10.80 6.17 -9.86L11.08 -3.62Q11.72 -2.80 11.72 -1.76L11.72 -1.76Q11.72 -0.72 10.69 -0.72L-10.69 -0.72Q-11.72 -0.72 -11.72 -1.76L-11.72 -1.76Q-11.72 -2.80 -11.08 -3.62L-6.17 -9.86Q-5.43 -10.80 -5.43 -12.00Z" fill="none" stroke="#000" stroke-width="3.3" stroke-opacity="0.6"/><path d="M-5.43 -17.27Q-5.43 -19.27 -3.43 -19.27L3.43 -19.27Q5.43 -19.27 5.43 -17.27L5.43 -12.00Q5.43 -10.80 6.17 -9.86L11.08 -3.62Q11.72 -2.80 11.72 -1.76L11.72 -1.76Q11.72 -0.72 10.69 -0.72L-10.69 -0.72Q-11.72 -0.72 -11.72 -1.76L-11.72 -1.76Q-11.72 -2.80 -11.08 -3.62L-6.17 -9.86Q-5.43 -10.80 -5.43 -12.00Z" fill="#262626" stroke="#6c6c6c" stroke-width="1.45"/><text x="0" y="-1.85" font-family="Liberation Sans" font-weight="bold" font-size="7.6" fill="#fff" stroke="#fff" stroke-width="0.22" text-anchor="middle">LX2</text></g>
<g transform="translate(255.1 280.60) rotate(-90)"><path d="M-5.43 -17.27Q-5.43 -19.27 -3.43 -19.27L3.43 -19.27Q5.43 -19.27 5.43 -17.27L5.43 -12.00Q5.43 -10.80 6.17 -9.86L11.08 -3.62Q11.72 -2.80 11.72 -1.76L11.72 -1.76Q11.72 -0.72 10.69 -0.72L-10.69 -0.72Q-11.72 -0.72 -11.72 -1.76L-11.72 -1.76Q-11.72 -2.80 -11.08 -3.62L-6.17 -9.86Q-5.43 -10.80 -5.43 -12.00Z" fill="none" stroke="#000" stroke-width="3.3" stroke-opacity="0.6"/><path d="M-5.43 -17.27Q-5.43 -19.27 -3.43 -19.27L3.43 -19.27Q5.43 -19.27 5.43 -17.27L5.43 -12.00Q5.43 -10.80 6.17 -9.86L11.08 -3.62Q11.72 -2.80 11.72 -1.76L11.72 -1.76Q11.72 -0.72 10.69 -0.72L-10.69 -0.72Q-11.72 -0.72 -11.72 -1.76L-11.72 -1.76Q-11.72 -2.80 -11.08 -3.62L-6.17 -9.86Q-5.43 -10.80 -5.43 -12.00Z" fill="#262626" stroke="#6c6c6c" stroke-width="1.45"/><text x="0" y="-1.85" font-family="Liberation Sans" font-weight="bold" font-size="7.6" fill="#fff" stroke="#fff" stroke-width="0.22" text-anchor="middle">RX3</text></g>
<g transform="translate(502.8 280.60) rotate(90)"><path d="M-5.43 -17.27Q-5.43 -19.27 -3.43 -19.27L3.43 -19.27Q5.43 -19.27 5.43 -17.27L5.43 -12.00Q5.43 -10.80 6.17 -9.86L11.08 -3.62Q11.72 -2.80 11.72 -1.76L11.72 -1.76Q11.72 -0.72 10.69 -0.72L-10.69 -0.72Q-11.72 -0.72 -11.72 -1.76L-11.72 -1.76Q-11.72 -2.80 -11.08 -3.62L-6.17 -9.86Q-5.43 -10.80 -5.43 -12.00Z" fill="none" stroke="#000" stroke-width="3.3" stroke-opacity="0.6"/><path d="M-5.43 -17.27Q-5.43 -19.27 -3.43 -19.27L3.43 -19.27Q5.43 -19.27 5.43 -17.27L5.43 -12.00Q5.43 -10.80 6.17 -9.86L11.08 -3.62Q11.72 -2.80 11.72 -1.76L11.72 -1.76Q11.72 -0.72 10.69 -0.72L-10.69 -0.72Q-11.72 -0.72 -11.72 -1.76L-11.72 -1.76Q-11.72 -2.80 -11.08 -3.62L-6.17 -9.86Q-5.43 -10.80 -5.43 -12.00Z" fill="#262626" stroke="#6c6c6c" stroke-width="1.45"/><text x="0" y="-1.85" font-family="Liberation Sans" font-weight="bold" font-size="7.6" fill="#fff" stroke="#fff" stroke-width="0.22" text-anchor="middle">LX3</text></g>
<g transform="translate(255.1 321.60) rotate(-90)"><path d="M-5.43 -17.27Q-5.43 -19.27 -3.43 -19.27L3.43 -19.27Q5.43 -19.27 5.43 -17.27L5.43 -12.00Q5.43 -10.80 6.17 -9.86L11.08 -3.62Q11.72 -2.80 11.72 -1.76L11.72 -1.76Q11.72 -0.72 10.69 -0.72L-10.69 -0.72Q-11.72 -0.72 -11.72 -1.76L-11.72 -1.76Q-11.72 -2.80 -11.08 -3.62L-6.17 -9.86Q-5.43 -10.80 -5.43 -12.00Z" fill="none" stroke="#000" stroke-width="3.3" stroke-opacity="0.6"/><path d="M-5.43 -17.27Q-5.43 -19.27 -3.43 -19.27L3.43 -19.27Q5.43 -19.27 5.43 -17.27L5.43 -12.00Q5.43 -10.80 6.17 -9.86L11.08 -3.62Q11.72 -2.80 11.72 -1.76L11.72 -1.76Q11.72 -0.72 10.69 -0.72L-10.69 -0.72Q-11.72 -0.72 -11.72 -1.76L-11.72 -1.76Q-11.72 -2.80 -11.08 -3.62L-6.17 -9.86Q-5.43 -10.80 -5.43 -12.00Z" fill="#567b31" stroke="#62913a" stroke-width="1.45"/><text x="0" y="-1.85" font-family="Liberation Sans" font-weight="bold" font-size="7.6" fill="#fff" stroke="#fff" stroke-width="0.22" text-anchor="middle">RX4</text></g>
<g transform="translate(502.8 321.60) rotate(90)"><path d="M-5.43 -17.27Q-5.43 -19.27 -3.43 -19.27L3.43 -19.27Q5.43 -19.27 5.43 -17.27L5.43 -12.00Q5.43 -10.80 6.17 -9.86L11.08 -3.62Q11.72 -2.80 11.72 -1.76L11.72 -1.76Q11.72 -0.72 10.69 -0.72L-10.69 -0.72Q-11.72 -0.72 -11.72 -1.76L-11.72 -1.76Q-11.72 -2.80 -11.08 -3.62L-6.17 -9.86Q-5.43 -10.80 -5.43 -12.00Z" fill="none" stroke="#000" stroke-width="3.3" stroke-opacity="0.6"/><path d="M-5.43 -17.27Q-5.43 -19.27 -3.43 -19.27L3.43 -19.27Q5.43 -19.27 5.43 -17.27L5.43 -12.00Q5.43 -10.80 6.17 -9.86L11.08 -3.62Q11.72 -2.80 11.72 -1.76L11.72 -1.76Q11.72 -0.72 10.69 -0.72L-10.69 -0.72Q-11.72 -0.72 -11.72 -1.76L-11.72 -1.76Q-11.72 -2.80 -11.08 -3.62L-6.17 -9.86Q-5.43 -10.80 -5.43 -12.00Z" fill="#567b31" stroke="#62913a" stroke-width="1.45"/><text x="0" y="-1.85" font-family="Liberation Sans" font-weight="bold" font-size="7.6" fill="#fff" stroke="#fff" stroke-width="0.22" text-anchor="middle">LX4</text></g>
<rect x="235.2" y="371.2" width="24.7" height="24.7" rx="2" fill="#567b31" stroke="#000" stroke-opacity="0.5" stroke-width="1"/>
<circle cx="247.5" cy="378.6" r="4.7" fill="#111"/>
<text x="247.5" y="393.1" font-family="Liberation Sans" font-weight="bold" font-size="7.5" fill="#fff" text-anchor="middle">SUB</text>
</svg>
</body></html>
